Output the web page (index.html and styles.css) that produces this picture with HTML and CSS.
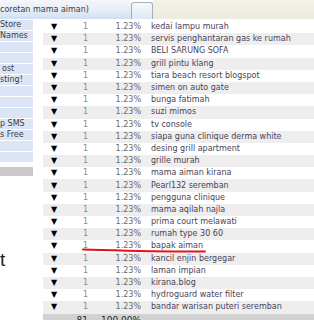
FILE: index.html
```html
<!DOCTYPE html>
<html>
<head>
<meta charset="utf-8">
<link rel="stylesheet" href="styles.css">
</head>
<body>
<div class="page">
  <div class="topbar">
    <div class="crumb">coretan mama aiman)</div>
    <div class="tab"></div>
    <div class="topfill"></div>
  </div>
  <div class="main">
    <div class="side">
      <div class="srow">Store</div>
      <div class="srow">Names</div>
      <div class="srow"></div>
      <div class="srow"></div>
      <div class="srow"><span class="ind">ost</span></div>
      <div class="srow">sting!</div>
      <div class="srow"></div>
      <div class="srow"></div>
      <div class="srow"></div>
      <div class="srow">p SMS</div>
      <div class="srow">s Free</div>
      <div class="srow"></div>
      <div class="srow"></div>
      <div class="sbar"></div>
      <div class="bigt">t</div>
    </div>
    <table class="stats">
      <colgroup><col class="c1"><col class="c2"><col class="c3"><col class="c4"></colgroup>
      <tbody>
        <tr><td class="ar">▼</td><td class="ct">1</td><td class="pc">1.23%</td><td class="kw">kedai lampu murah</td></tr>
        <tr><td class="ar">▼</td><td class="ct">1</td><td class="pc">1.23%</td><td class="kw">servis penghantaran gas ke rumah</td></tr>
        <tr><td class="ar">▼</td><td class="ct">1</td><td class="pc">1.23%</td><td class="kw">BELI SARUNG SOFA</td></tr>
        <tr><td class="ar">▼</td><td class="ct">1</td><td class="pc">1.23%</td><td class="kw">grill pintu klang</td></tr>
        <tr><td class="ar">▼</td><td class="ct">1</td><td class="pc">1.23%</td><td class="kw">tiara beach resort blogspot</td></tr>
        <tr><td class="ar">▼</td><td class="ct">1</td><td class="pc">1.23%</td><td class="kw">simen on auto gate</td></tr>
        <tr><td class="ar">▼</td><td class="ct">1</td><td class="pc">1.23%</td><td class="kw">bunga fatimah</td></tr>
        <tr><td class="ar">▼</td><td class="ct">1</td><td class="pc">1.23%</td><td class="kw">suzi mimos</td></tr>
        <tr><td class="ar">▼</td><td class="ct">1</td><td class="pc">1.23%</td><td class="kw">tv console</td></tr>
        <tr><td class="ar">▼</td><td class="ct">1</td><td class="pc">1.23%</td><td class="kw">siapa guna clinique derma white</td></tr>
        <tr><td class="ar">▼</td><td class="ct">1</td><td class="pc">1.23%</td><td class="kw">desing grill apartment</td></tr>
        <tr><td class="ar">▼</td><td class="ct">1</td><td class="pc">1.23%</td><td class="kw">grille murah</td></tr>
        <tr><td class="ar">▼</td><td class="ct">1</td><td class="pc">1.23%</td><td class="kw">mama aiman kirana</td></tr>
        <tr><td class="ar">▼</td><td class="ct">1</td><td class="pc">1.23%</td><td class="kw">Pearl132 seremban</td></tr>
        <tr><td class="ar">▼</td><td class="ct">1</td><td class="pc">1.23%</td><td class="kw">pengguna clinique</td></tr>
        <tr><td class="ar">▼</td><td class="ct">1</td><td class="pc">1.23%</td><td class="kw">mama aqilah najla</td></tr>
        <tr><td class="ar">▼</td><td class="ct">1</td><td class="pc">1.23%</td><td class="kw">prima court melawati</td></tr>
        <tr><td class="ar">▼</td><td class="ct">1</td><td class="pc">1.23%</td><td class="kw">rumah type 30 60</td></tr>
        <tr><td class="ar">▼</td><td class="ct">1</td><td class="pc">1.23%</td><td class="kw">bapak aiman</td></tr>
        <tr><td class="ar">▼</td><td class="ct">1</td><td class="pc">1.23%</td><td class="kw">kancil enjin bergegar</td></tr>
        <tr><td class="ar">▼</td><td class="ct">1</td><td class="pc">1.23%</td><td class="kw">laman impian</td></tr>
        <tr><td class="ar">▼</td><td class="ct">1</td><td class="pc">1.23%</td><td class="kw">kirana.blog</td></tr>
        <tr><td class="ar">▼</td><td class="ct">1</td><td class="pc">1.23%</td><td class="kw">hydroguard water filter</td></tr>
        <tr><td class="ar">▼</td><td class="ct">1</td><td class="pc">1.23%</td><td class="kw">bandar warisan puteri seremban</td></tr>
        <tr class="total"><td></td><td class="ct">81</td><td class="pc">100.00%</td><td></td></tr>
      </tbody>
    </table>
  </div>
  <svg class="mark" width="314" height="320" viewBox="0 0 314 320">
    <path d="M83 249.5 C 120 250.5, 160 252, 205 251.5" fill="none" stroke="#e3121b" stroke-width="2" stroke-linecap="round"/>
  </svg>
</div>
</body>
</html>
```

FILE: styles.css
```css
html, body {
  margin: 0;
  padding: 0;
  overflow: hidden;
  background: #fff;
}
.page {
  position: relative;
  width: 314px;
  height: 320px;
  overflow: hidden;
  font-family: "DejaVu Sans", Verdana, sans-serif;
}
.topbar {
  display: flex;
  height: 19px;
}
.crumb {
  width: 131px;
  flex: none;
  background: linear-gradient(#f3f6fa, #e6edf6 55%, #cfdff1);
  font-size: 8px;
  color: #3b3b3b;
  line-height: 20px;
  white-space: nowrap;
}
.tab {
  width: 20px;
  flex: none;
  margin-top: 2px;
  border: 1px solid #a9afb8;
  border-bottom: none;
  border-radius: 3px 3px 0 0;
  background: linear-gradient(#f7f9fc, #dde8f5);
}
.topfill {
  flex: 1;
  background: linear-gradient(#f3f2ea, #ecebdd);
}
.main {
  display: flex;
  align-items: flex-start;
}
.side {
  width: 33px;
  flex: none;
  margin-top: 1px;
}
.srow {
  height: 10px;
  border-bottom: 1px solid #fff;
  background: #dbe5f5;
  font-size: 8px;
  line-height: 10px;
  color: #3d3d3d;
  white-space: nowrap;
  overflow: hidden;
}
.ind {
  padding-left: 2px;
}
.sbar {
  margin-top: 4px;
  height: 9px;
  background: #c9c9c9;
}
.bigt {
  margin-top: 74px;
  font-family: "Liberation Sans", Arial, sans-serif;
  font-size: 19px;
  line-height: 20px;
  color: #222;
}
.stats {
  margin-left: 10px;
  margin-top: 2px;
  flex: 1;
  border-collapse: collapse;
  table-layout: fixed;
  font-size: 8px;
}
.c1 { width: 24px; }
.c2 { width: 22px; }
.c3 { width: 56px; }
.stats td {
  height: 12.2px;
  padding: 0;
  line-height: 12px;
  white-space: nowrap;
  overflow: hidden;
}
.stats tbody tr:nth-child(even) td {
  background: #eeeeee;
}
.ar {
  padding-left: 8px !important;
  color: #000;
  font-size: 8px;
}
.ct {
  text-align: right;
  padding-right: 1px !important;
  color: #8a8a8a;
}
.pc {
  text-align: right;
  padding-right: 4px !important;
  color: #6a6a6a;
}
.kw {
  padding-left: 6px !important;
  color: #4a4258;
}
.stats tr.total td {
  background: #d2d2d2;
  color: #222;
  font-size: 9px;
}
.mark {
  position: absolute;
  left: 0;
  top: 0;
  pointer-events: none;
}
```
